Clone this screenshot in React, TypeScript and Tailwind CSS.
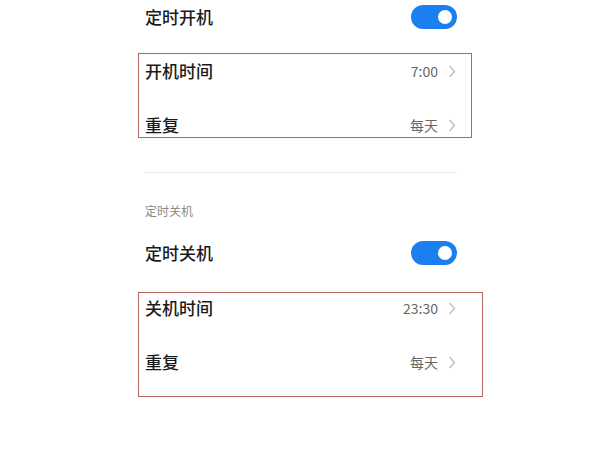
import React from "react";

const font = { fontFamily: '"Noto Sans CJK SC", "Noto Sans", sans-serif' };

function Toggle() {
  return (
    <div className="w-[46px] h-[24px] rounded-full bg-[#1b7ff0] flex items-center justify-end pr-[5px]">
      <div className="w-[14px] h-[14px] rounded-full bg-white" />
    </div>
  );
}

function Chevron() {
  return (
    <svg width="8" height="13" viewBox="0 0 8 13" className="ml-[10px]">
      <path d="M1.5 1 L6.5 6.5 L1.5 12" fill="none" stroke="#b8b8b8" strokeWidth="1.2" />
    </svg>
  );
}

function SwitchRow({ label }: { label: string }) {
  return (
    <div className="h-[34px] flex items-center justify-between">
      <span className="text-[17px] font-medium text-[#1a1a1a]">{label}</span>
      <Toggle />
    </div>
  );
}

function NavRow({ label, value }: { label: string; value: string }) {
  return (
    <div className="h-[54px] flex items-center justify-between">
      <span className="text-[17px] font-medium text-[#1a1a1a]">{label}</span>
      <div className="flex items-center pr-[1px]">
        <span className="text-[14px] text-[#666666]">{value}</span>
        <Chevron />
      </div>
    </div>
  );
}

export default function App() {
  return (
    <div className="relative w-[600px] h-[450px] bg-white overflow-hidden" style={font}>
      <div className="ml-[145px] w-[312px] flex flex-col">
        <SwitchRow label="定时开机" />
        <div className="mt-[10px]">
          <NavRow label="开机时间" value="7:00" />
          <NavRow label="重复" value="每天" />
        </div>
        <div className="mt-[20px] h-px bg-[#ebebeb]" />
        <div className="mt-[30px] h-[16px] flex items-center text-[12px] text-[#8a8a8a]">定时关机</div>
        <div className="mt-[17px]">
          <SwitchRow label="定时关机" />
        </div>
        <div className="mt-[11px]">
          <NavRow label="关机时间" value="23:30" />
          <NavRow label="重复" value="每天" />
        </div>
      </div>
      <div className="absolute left-[138px] top-[53px] w-[334px] h-[85px] border-[1.5px] border-[#b4675e]" />
      <div className="absolute left-[138px] top-[292px] w-[345px] h-[105px] border-[1.5px] border-[#b4675e]" />
    </div>
  );
}
